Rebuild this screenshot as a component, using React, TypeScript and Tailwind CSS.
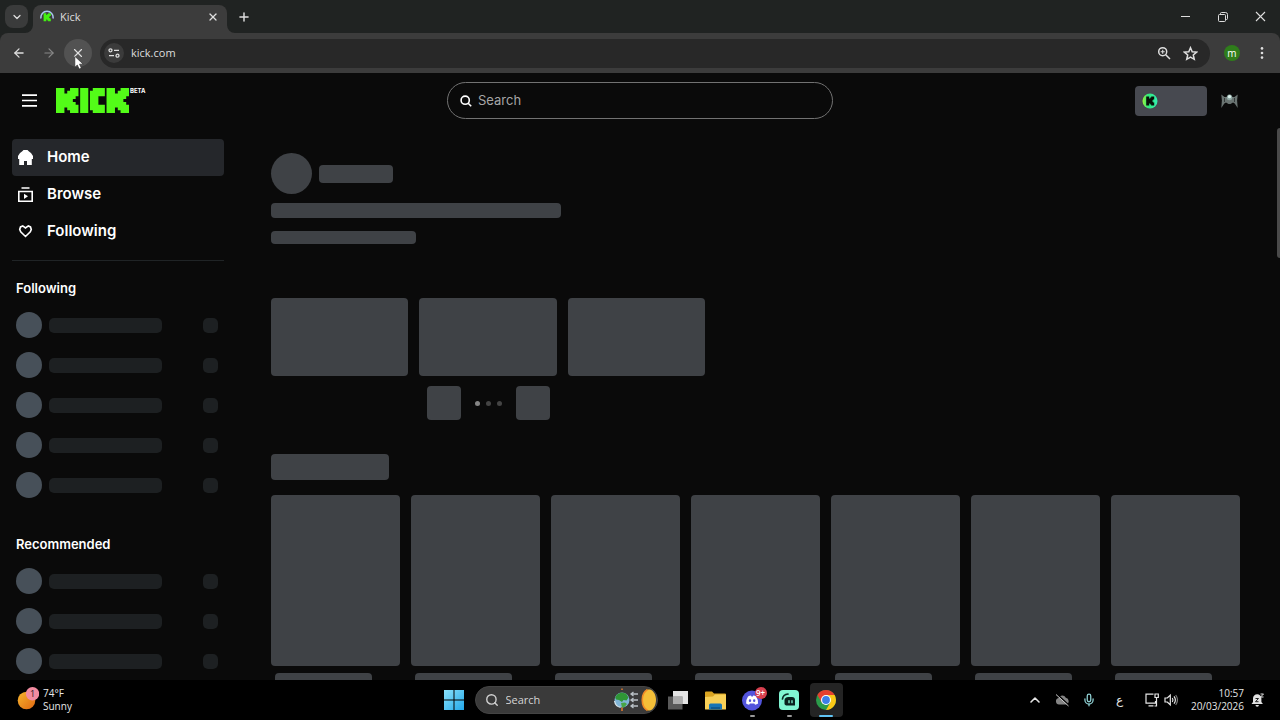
import type { ReactNode } from "react";
import { ArrowLeft, ArrowRight, ChevronDown, ChevronUp, Mic, Plus, Search, X } from "lucide-react";

const K_GLYPH = "M0 0h3v2h1v-1h1v-1h3v3h-1v1h-1v1h1v1h1v3h-3v-1h-1v-1h-1v2h-3z";

function KickLogo() {
  return (
    <svg viewBox="0 0 26 9" className="h-[25px] w-[73px]" preserveAspectRatio="none" fill="#53fc18" aria-hidden="true">
      <path d={K_GLYPH} />
      <path d="M8.6 0h2.900v9h-2.900z" />
      <path d="M13.100 0h4.300v3h-2.300v3h2.300v3h-4.300v-1h-1v-7h1z" />
      <path d={K_GLYPH} transform="translate(18 0)" />
    </svg>
  );
}

function TabStrip() {
  return (
    <div className="flex h-[33px] items-end bg-[#202322] text-[#dedede]">
      <button aria-label="Search tabs" className="mb-[5px] ml-[5px] flex size-[23px] items-center justify-center rounded-lg bg-[#3a3b3b]">
        <ChevronDown className="size-3" strokeWidth={2.5} />
      </button>
      <div className="relative ml-[5px] flex h-7 w-[194px] items-center rounded-t-lg bg-[#3c3c3c] pb-1 pl-[7px] pr-2">
        <svg viewBox="0 0 8 8" className="absolute -left-2 bottom-0 size-2" fill="#3c3c3c" aria-hidden="true">
          <path d="M8 0v8H0a8 8 0 0 0 8-8z" />
        </svg>
        <svg viewBox="0 0 8 8" className="absolute -right-2 bottom-0 size-2" fill="#3c3c3c" aria-hidden="true">
          <path d="M0 0v8h8a8 8 0 0 1-8-8z" />
        </svg>
        <svg viewBox="0 0 14 14" className="size-3.5" aria-hidden="true">
          <path d="M1 8.5A6.1 6.1 0 1 1 13 8.500" fill="none" stroke="#a9c5ee" strokeWidth="1.500" />
          <path d={K_GLYPH} transform="translate(3.600 3.200) scale(.9)" fill="#43f012" />
        </svg>
        <span className="ml-1.5 flex-1 text-[11px]">Kick</span>
        <button aria-label="Close tab" className="flex size-3 items-center justify-center">
          <X className="size-3" strokeWidth={2.600} />
        </button>
      </div>
      <button aria-label="New tab" className="mb-[9px] ml-2.5 flex size-3.5 items-center justify-center">
        <Plus className="size-3.5" strokeWidth={2.500} />
      </button>
      <div className="ml-auto flex h-full items-center gap-[27px] pr-3.5">
        <button aria-label="Minimize">
          <svg viewBox="0 0 11 11" className="size-[11px]" stroke="currentColor" aria-hidden="true"><path d="M1 5.500h9" /></svg>
        </button>
        <button aria-label="Restore">
          <svg viewBox="0 0 10 10" className="size-2.5" fill="none" stroke="currentColor" aria-hidden="true">
            <rect x=".5" y="2.500" width="7" height="7" rx="1" />
            <path d="M2.500 2.500v-1a1 1 0 0 1 1-1h4a2 2 0 0 1 2 2v4a1 1 0 0 1-1 1h-1" />
          </svg>
        </button>
        <button aria-label="Close window">
          <svg viewBox="0 0 11 11" className="size-[11px]" stroke="currentColor" strokeWidth="1.100" aria-hidden="true"><path d="M1 1l9 9M10 1l-9 9" /></svg>
        </button>
      </div>
    </div>
  );
}

function Toolbar() {
  return (
    <div className="bg-[#202322]">
      <div className="flex h-10 items-center rounded-t-lg bg-[#3c3c3c] px-3 text-[#dedede]">
        <button aria-label="Back"><ArrowLeft className="size-3.5" strokeWidth={2.200} /></button>
        <button aria-label="Forward" className="ml-4 text-[#888888]"><ArrowRight className="size-3.5" /></button>
        <button aria-label="Stop loading" className="relative ml-2 flex size-7 items-center justify-center rounded-full bg-[#525252]">
          <X className="size-3.5" strokeWidth={2} />
          <svg viewBox="0 0 12 18" className="absolute left-2.5 top-4 z-10 h-4 w-2.5" aria-hidden="true">
            <path d="M1 1v13l3-2.600 2.200 4.800 2.600-1.100-2.200-4.700H11z" fill="#fff" stroke="#222" strokeWidth=".7" />
          </svg>
        </button>
        <div className="ml-2 flex h-[29px] flex-1 items-center rounded-full bg-[#282828] pl-1 pr-3">
          <button aria-label="View site information" className="flex size-5 items-center justify-center rounded-full bg-[#3b3b3b]">
            <svg viewBox="0 0 12 10" className="h-2.5 w-3" fill="none" stroke="currentColor" strokeWidth="1.300" aria-hidden="true">
              <circle cx="2.500" cy="2.300" r="1.500" /><path d="M6 2.300h5M1 7.700h5" /><circle cx="9.500" cy="7.700" r="1.500" />
            </svg>
          </button>
          <input aria-label="Address" defaultValue="kick.com" className="ml-[7px] min-w-0 flex-1 bg-transparent text-[11px] outline-none" />
          <button aria-label="Zoom">
            <svg viewBox="0 0 14 14" className="size-3.5" fill="none" stroke="currentColor" strokeWidth="1.500" aria-hidden="true">
              <circle cx="5.700" cy="5.700" r="4" /><path d="M8.700 8.700L13 13" /><path d="M3.700 5.700h4M5.700 3.700v4" strokeWidth="1.100" />
            </svg>
          </button>
          <button aria-label="Bookmark this tab" className="ml-3">
            <svg viewBox="0 0 14 14" className="size-[15px]" fill="none" stroke="currentColor" strokeWidth="1.400" aria-hidden="true">
              <path d="M7 1.600l1.600 3.800 4.100.3-3.100 2.700.9 4L7 10.300l-3.500 2.100.9-4L1.300 5.700l4.100-.3z" />
            </svg>
          </button>
        </div>
        <button aria-label="Profile" className="ml-3.5 size-4 rounded-full bg-[#2f7d1b] text-[10px] leading-4 text-white">m</button>
        <button aria-label="Menu" className="ml-4">
          <svg viewBox="0 0 12 14" className="h-3.5 w-3" fill="currentColor" aria-hidden="true">
            <circle cx="6" cy="2.400" r="1.300" /><circle cx="6" cy="7" r="1.300" /><circle cx="6" cy="11.600" r="1.300" />
          </svg>
        </button>
      </div>
    </div>
  );
}

function SiteHeader() {
  return (
    <header className="grid h-[55px] shrink-0 grid-cols-[1fr_auto_1fr] items-center">
      <div className="flex items-center pl-[22px]">
        <button aria-label="Toggle sidebar">
          <svg viewBox="0 0 15 13" className="h-[13px] w-[15px]" stroke="#fff" strokeWidth="1.700" aria-hidden="true"><path d="M0 1.200h15M0 6.500h15M0 11.800h15" /></svg>
        </button>
        <a href="#home" aria-label="Kick home" className="ml-[19px] flex items-start">
          <KickLogo />
          <sup className="top-0 ml-px text-[6px] font-bold leading-[6px] text-white">BETA</sup>
        </a>
      </div>
      <label className="flex h-[37px] w-[386px] items-center rounded-full border border-[#727272] pl-3 pr-4">
        <svg viewBox="0 0 12 12" className="size-3" fill="none" stroke="#fff" strokeWidth="1.600" aria-hidden="true">
          <circle cx="5.200" cy="5.200" r="4.100" /><path d="M8.200 8.200l3 3" />
        </svg>
        <input type="search" aria-label="Search" placeholder="Search" className="ml-1.5 min-w-0 flex-1 bg-transparent text-[13px] text-white outline-none placeholder:text-[#a6a6a6]" />
      </label>
      <div className="flex items-center justify-end gap-3.5 pr-[42px]">
        <button aria-label="Get kicks" className="flex h-[30px] w-[72px] items-center rounded bg-[#474950] pl-[7px]">
          <svg viewBox="0 0 16 16" className="size-4" aria-hidden="true">
            <defs>
              <linearGradient id="coin" x2="1" y2="0"><stop stopColor="#9cf53c" /><stop offset=".35" stopColor="#2fe87a" /><stop offset="1" stopColor="#35eeb0" /></linearGradient>
            </defs>
            <circle cx="8" cy="8" r="7.500" fill="url(#coin)" />
            <path d={K_GLYPH} transform="translate(4.200 3.600)" fill="#071108" />
          </svg>
        </button>
        <button aria-label="Account">
          <svg viewBox="0 0 17 16" className="h-4 w-[17px]" aria-hidden="true">
            <path d="M.3 1.500L3.500 4 6 4l1.300-2.500h2.400L11 4h2.500l3.200-2.500-.6 6 .6 7.500-3-4.500L12 9.500 9.500 11h-2L5 9.500l-1.700 1L.3 15l.6-7.500z" fill="#6a7472" />
            <path d="M3.500 5v4M13.500 5v4" stroke="#343b3b" />
            <circle cx="8.500" cy="4.500" r="2.800" fill="#8fa7a3" /><circle cx="8.500" cy="3.700" r="1.600" fill="#dcf3ee" />
          </svg>
        </button>
      </div>
    </header>
  );
}

const NAV: { label: string; icon: ReactNode; active?: boolean }[] = [
  { label: "Home", active: true, icon: <path d="M5.500 0h4L11 1.500 13 3l2 3v3h-1.200v6H9v-4H6v4H1.200V9H0V6l2-3 2-1.500z" fill="#fff" /> },
  {
    label: "Browse",
    icon: <g fill="none" stroke="#fff" strokeWidth="1.600"><path d="M3.500 1h8M.8 4.500h13.400v9.700H.8z" /><path d="M6 6.700l4 2.600-4 2.600z" fill="#fff" stroke="none" /></g>,
  },
  {
    label: "Following",
    icon: <path d="M4.700 1.900L2.500 2.900 1.700 5.400l1 2.500 4.800 4.600 4.800-4.600 1-2.500-.8-2.500-2.200-1L7.500 4z" fill="none" stroke="#fff" strokeWidth="1.600" />,
  },
];

function ChannelSkeletons({ title, count }: { title: string; count: number }) {
  return (
    <section className="pl-1 pr-1.5">
      <h2 className="text-[13px] font-semibold leading-5 text-white">{title}</h2>
      <ul className="mt-3.5 flex flex-col gap-3.5">
        {Array.from({ length: count }, (_, i) => (
          <li key={i} className="flex h-[26px] items-center">
            <span className="size-[26px] rounded-full bg-[#475059]" />
            <span className="ml-[7px] h-[15px] w-[113px] rounded-[5px] bg-[#1d2022]" />
            <span className="ml-auto size-[15px] rounded-[5px] bg-[#1d2022]" />
          </li>
        ))}
      </ul>
    </section>
  );
}

function Sidebar() {
  return (
    <aside className="flex w-[235px] shrink-0 flex-col overflow-hidden pl-3 pr-[11px] pt-[11px]">
      <nav>
        {NAV.map((item) => (
          <a key={item.label} href={"#" + item.label.toLowerCase()} className={"flex h-[37px] items-center rounded pl-1.5 text-[15px] font-semibold text-white " + (item.active ? "bg-[#25272b]" : "")}>
            <svg viewBox="0 0 15 15" className="mr-3.5 size-[15px]" aria-hidden="true">{item.icon}</svg>
            {item.label}
          </a>
        ))}
      </nav>
      <hr className="mb-[17px] mt-2.5 border-[#202426]" />
      <div className="flex flex-col gap-9">
        <ChannelSkeletons title="Following" count={5} />
        <ChannelSkeletons title="Recommended" count={3} />
      </div>
    </aside>
  );
}

function Feed() {
  return (
    <main className="min-w-0 flex-1 overflow-hidden pl-9 pr-10 pt-[25px]">
      <section className="w-[434px]">
        <div className="flex items-center gap-[7px]">
          <span className="size-[41px] rounded-full bg-[#3f4246]" />
          <span className="h-[18px] w-[74px] rounded bg-[#3f4246]" />
        </div>
        <div className="mt-[9px] h-[15px] w-[290px] rounded bg-[#3f4246]" />
        <div className="mt-[13px] h-[13px] w-[145px] rounded bg-[#3f4246]" />
        <div className="mt-[54px] grid grid-cols-3 gap-[11px]">
          {[0, 1, 2].map((i) => <div key={i} className="h-[78px] rounded bg-[#3f4246]" />)}
        </div>
        <div className="mt-2.5 flex items-center justify-center">
          <span className="size-[34px] rounded bg-[#3f4246]" />
          <span className="mx-3.5 flex gap-1.5">
            <i className="size-[5px] rounded-full bg-[#858585]" />
            <i className="size-[5px] rounded-full bg-[#444444]" />
            <i className="size-[5px] rounded-full bg-[#444444]" />
          </span>
          <span className="size-[34px] rounded bg-[#3f4246]" />
        </div>
      </section>
      <section className="mt-[34px]">
        <div className="h-[26px] w-[118px] rounded bg-[#3f4246]" />
        <div className="mt-[15px] grid grid-cols-7 gap-[11px]">
          {Array.from({ length: 7 }, (_, i) => (
            <div key={i}>
              <div className="h-[171px] rounded-sm bg-[#3f4246]" />
              <div className="mx-1 mt-[7px] h-4 w-[97px] rounded bg-[#3f4246]" />
            </div>
          ))}
        </div>
      </section>
    </main>
  );
}

function AppButton({ label, state, children }: { label: string; state?: "open" | "active"; children: ReactNode }) {
  return (
    <button aria-label={label} className={"relative flex h-[34px] w-[33px] items-center justify-center rounded " + (state === "active" ? "bg-[#242424]" : "")}>
      {children}
      {state === "open" && <span className="absolute bottom-0 h-0.5 w-[5px] rounded-full bg-[#999999]" />}
      {state === "active" && <span className="absolute bottom-0 h-0.5 w-3.5 rounded-full bg-[#60c4f4]" />}
    </button>
  );
}

function Taskbar() {
  return (
    <footer className="grid h-10 shrink-0 grid-cols-[1fr_auto_1fr] items-center bg-black text-[#e6e6e6]">
      <button className="flex items-center gap-1 pl-[17px] text-left text-[10px] leading-[13px]">
        <svg viewBox="0 0 22 26" className="h-[26px] w-[22px]" aria-hidden="true">
          <defs>
            <linearGradient id="sun" x2="1" y2="1"><stop stopColor="#f6b52d" /><stop offset="1" stopColor="#e06812" /></linearGradient>
          </defs>
          <circle cx="9.500" cy="13.500" r="8.800" fill="url(#sun)" />
          <circle cx="15.500" cy="6.700" r="6.700" fill="#f28ba0" />
          <text x="15.500" y="10" fontSize="9" textAnchor="middle" fill="#26151a">1</text>
        </svg>
        <span>74°F<br />Sunny</span>
      </button>

      <div className="flex items-center gap-1">
        <AppButton label="Start">
          <svg viewBox="0 0 20 20" className="size-5" aria-hidden="true">
            <defs>
              <linearGradient id="win" x2="1" y2="1" gradientUnits="userSpaceOnUse" gradientTransform="scale(20)"><stop stopColor="#8be2fb" /><stop offset="1" stopColor="#22a7ea" /></linearGradient>
            </defs>
            <path d="M0 0h9.500v9.500H0zM10.500 0H20v9.500h-9.500zM0 10.500h9.500V20H0zM10.500 10.500H20V20h-9.500z" fill="url(#win)" />
          </svg>
        </AppButton>
        <label className="flex h-7 w-[183px] items-center rounded-full border border-[#444444] bg-[#3a3a3a] pl-[9px]">
          <Search className="size-3.5 text-[#d0d0d0]" strokeWidth={2.400} />
          <input aria-label="Search Windows" placeholder="Search" className="ml-[7px] min-w-0 flex-1 bg-transparent text-[11px] outline-none placeholder:text-[#d4d4d4]" />
          <svg viewBox="0 0 44 26" className="h-[26px] w-11" aria-hidden="true">
            <circle cx="9" cy="13" r="7.500" fill="#7fb4d6" />
            <path d="M4 7.500l4-2 5 1 2.500 4-2 3-3-.5-1.500 2-3-2-3-.5-.8-2z" fill="#2f9636" />
            <path d="M8 16l4-.5 2 1.500-3 3.500H9z" fill="#47a545" />
            <path d="M9 3V1.500M9 24v-3.500" stroke="#e37b2d" strokeWidth="1.500" />
            <path d="M1.600 14a7.500 7.500 0 0 0 6 6.400" fill="none" stroke="#d8e6ec" strokeWidth="1.300" />
            <path d="M19 7h6M19 13h6M19 19h6M20.500 5L18 7l2.500 2M20.500 11L18 13l2.500 2M20.500 17L18 19l2.500 2" fill="none" stroke="#b9c0c5" strokeWidth="1.300" />
            <path d="M35 2.500h2c3.500 1 6 5.500 6 10.500s-2.500 9.500-6 10.500h-2c-4-2-6-6-6-10.500s2-8.500 6-10.500z" fill="#f4bf38" />
            <path d="M34.500 2.500c-7 4-7 17 0 21" fill="none" stroke="#ef8a27" strokeWidth="1.600" />
          </svg>
        </label>
        <AppButton label="Task view">
          <svg viewBox="0 0 22 20" className="h-5 w-[22px]" aria-hidden="true">
            <path d="M6 1h15v13H6z" fill="#e4e4e4" /><path d="M1 6.500h14.500v13H1z" fill="#6f6f6f" fillOpacity=".8" /><path d="M6 6.500h9.500V14H6z" fill="#adadad" />
          </svg>
        </AppButton>
        <AppButton label="File Explorer">
          <svg viewBox="0 0 21 19" className="h-[19px] w-[21px]" aria-hidden="true">
            <path d="M0 1.500Q0 .5 1 .5h6l2 2h11q1 0 1 1V8H0z" fill="#dba521" /><path d="M0 6l8-.5 2-2h11V18q0 .5-.5.500H.5Q0 18.500 0 18z" fill="#f8d057" />
            <path d="M4 18.500V14q0-1.500 1.500-1.500h10Q17 12.500 17 14v4.500z" fill="#1975b5" /><path d="M6 17h9" stroke="#0f5285" strokeWidth="1.500" />
          </svg>
        </AppButton>
        <AppButton label="Discord" state="open">
          <svg viewBox="0 0 24 24" className="size-6" aria-hidden="true">
            <circle cx="12" cy="12.500" r="10" fill="#5254dc" />
            <path d="M8 8.500q1.500-.8 3-.9l.4.800h1.400l.4-.8q1.500.1 3 .9 2 3 1.900 7-1.300 1-3 1.300l-.8-1.300h-4.400l-.8 1.300q-1.700-.3-3-1.300Q6 11.500 8 8.500z" fill="#fff" />
            <ellipse cx="10" cy="12.700" rx="1.200" ry="1.400" fill="#5254dc" /><ellipse cx="14.200" cy="12.700" rx="1.200" ry="1.400" fill="#5254dc" />
          </svg>
          <span className="absolute right-0.5 top-1 h-3 w-3 rounded-full bg-[#d8404f] text-center text-[8px] font-semibold leading-3 text-white">9+</span>
        </AppButton>
        <AppButton label="Streamlabs" state="open">
          <svg viewBox="0 0 20 20" className="size-5" aria-hidden="true">
            <rect width="20" height="20" rx="4" fill="#80f5d2" />
            <path d="M3.500 9Q4 4.500 9 4" fill="none" stroke="#0b2a26" strokeWidth="1.700" strokeLinecap="round" />
            <path d="M5.500 10.500q0-3.500 4-3.500H13q3 0 3 3v5.500H8.500q-3 0-3-2z" fill="#09201d" />
            <path d="M10 10.700v2M13 10.700v2" stroke="#80f5d2" strokeWidth="1.300" strokeLinecap="round" />
          </svg>
        </AppButton>
        <AppButton label="Google Chrome" state="active">
          <svg viewBox="0 0 20 20" className="size-5" aria-hidden="true">
            <circle cx="10" cy="10" r="10" fill="#2b9b4a" />
            <path d="M10 5h8.660A10 10 0 0 1 10 20l4.330-7.500z" fill="#fbc817" />
            <path d="M5.670 12.500L1.340 5A10 10 0 0 1 18.660 5H10z" fill="#e5402f" />
            <circle cx="10" cy="10" r="5" fill="#fff" /><circle cx="10" cy="10" r="3.900" fill="#3c7fe8" />
          </svg>
        </AppButton>
      </div>

      <div className="flex items-center justify-end pr-4">
        <button aria-label="Show hidden icons"><ChevronUp className="size-4" strokeWidth={2.400} /></button>
        <button aria-label="Cloud storage" className="ml-3">
          <svg viewBox="0 0 15 14" className="h-3.5 w-[15px]" aria-hidden="true">
            <path d="M4 11.500a3.300 3.300 0 0 1-.5-6.500 4 4 0 0 1 7.300-.2A3.500 3.500 0 0 1 11.500 11.500z" fill="#858585" /><path d="M2.300 1.500l12 11" stroke="#000" strokeWidth="1.500" /><path d="M1 1.500l12.500 11.500" stroke="#ccc" />
          </svg>
        </button>
        <button aria-label="Microphone" className="ml-3 text-[#8fd0d3]"><Mic className="size-3.5" strokeWidth={2.200} /></button>
        <button aria-label="Keyboard language" className="ml-[17px] w-3.5 text-center text-xs">ع</button>
        <button aria-label="Network" className="ml-[18px]">
          <svg viewBox="0 0 14 14" className="size-3.5" fill="none" stroke="currentColor" strokeWidth="1.200" aria-hidden="true">
            <path d="M8.500 1.200H1v9h9.500V8M3.500 12.800h5M11.500 5v8H9.500M10 1h3.300v3.500H10z" />
          </svg>
        </button>
        <button aria-label="Volume" className="ml-[5px]">
          <svg viewBox="0 0 14 14" className="size-3.5" fill="none" stroke="currentColor" strokeWidth="1.200" aria-hidden="true">
            <path d="M1 5h2.300L6.300 2.200v9.600L3.300 9H1zM8.300 5q1.400 2 0 4M10 3.300q2.800 3.700 0 7.400" /><path d="M11.700 2q3.500 5 0 10" stroke="#777" />
          </svg>
        </button>
        <time dateTime="2026-03-20T10:57" className="ml-[13px] text-right text-[10px] leading-[13px]">10:57<br />20/03/2026</time>
        <button aria-label="Notifications" className="ml-[7px]">
          <svg viewBox="0 0 13 14" className="h-3.5 w-[13px]" aria-hidden="true">
            <path d="M.5 11L2 9V5.500a4.200 4.200 0 0 1 8.400 0V9l1.500 2z" fill="#e2e2e2" /><path d="M4.500 12a1.700 1.700 0 0 0 3.400 0z" fill="#e2e2e2" />
            <path d="M4.500 5.500h3L4.500 8.700h3" fill="none" stroke="#222" /><path d="M9.500 1h3l-3 3h3" fill="none" stroke="#e2e2e2" />
          </svg>
        </button>
      </div>
    </footer>
  );
}

export default function App() {
  return (
    <div className="flex h-screen flex-col overflow-hidden bg-[#0a0a0a] font-['Open_Sans','Noto_Sans',sans-serif]">
      <TabStrip />
      <Toolbar />
      <div className="relative flex min-h-0 flex-1 flex-col font-['Inter',sans-serif]">
        <SiteHeader />
        <div className="flex min-h-0 flex-1">
          <Sidebar />
          <Feed />
        </div>
        <span className="absolute right-0 top-[55px] h-[130px] w-[3px] rounded-l-full bg-[#4a4a4a]" />
      </div>
      <Taskbar />
    </div>
  );
}
